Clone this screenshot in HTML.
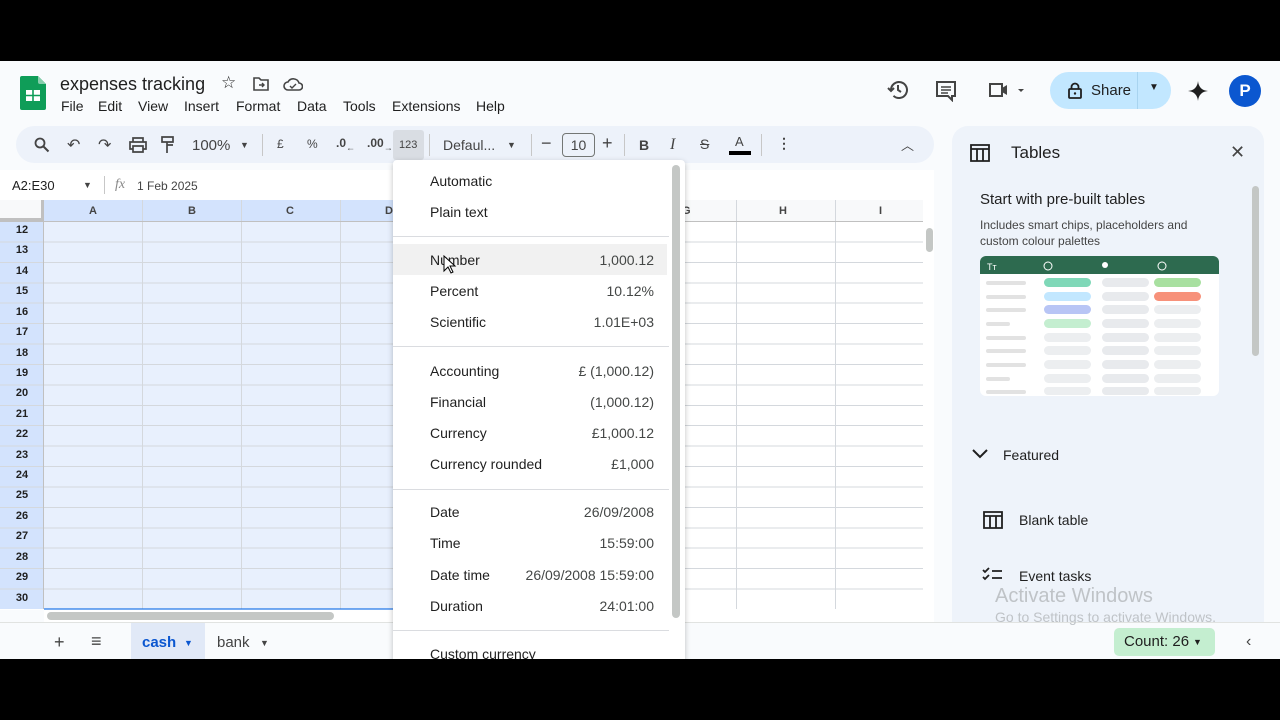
<!DOCTYPE html>
<html><head><meta charset="utf-8"><style>
*{box-sizing:border-box;margin:0;padding:0}
body{width:1280px;height:720px;background:#000;position:relative;overflow:hidden;font-family:"Liberation Sans",Arial,sans-serif;color:#1f1f1f}
.a{position:absolute}
#app{left:0;top:61px;width:1280px;height:598px;background:#f9fbfd;overflow:hidden}
.t{position:absolute;white-space:nowrap}
.ic{position:absolute}
.mi{position:absolute;left:0;width:292px;height:31px;font-size:14px;color:#1f1f1f}
.mi span{position:absolute;left:37px;top:8px}
.mi b{position:absolute;right:31px;top:8px;font-weight:normal;color:#444746}
.sep{position:absolute;left:0;width:276px;height:1px;background:#dadce0}
.rn{position:absolute;left:0;width:44px;text-align:center;font-size:11px;font-weight:bold;color:#1f1f1f}
.ch{position:absolute;top:205px;font-size:11px;font-weight:bold;color:#444}
.mb{position:absolute;top:37px;font-size:14px}
</style></head><body>
<div id="app" class="a">
<svg class="ic" style="left:20px;top:15px" width="26" height="34" viewBox="0 0 26 34"><path d="M2 0h16l8 8v24a2 2 0 0 1-2 2H2a2 2 0 0 1-2-2V2a2 2 0 0 1 2-2z" fill="#0f9d58"/><path d="M18 0l8 8h-6a2 2 0 0 1-2-2z" fill="#87ceac"/><rect x="6" y="14" width="14" height="11" fill="#fff"/><path d="M6 19.5h14M13 14v11" stroke="#0f9d58" stroke-width="1.6"/></svg>
<div class="t" style="left:60px;top:13px;font-size:18px">expenses tracking</div>
<div class="t" style="left:221px;top:12px;font-size:17px">☆</div>
<svg class="ic" style="left:253px;top:16px" width="16" height="14" viewBox="0 0 16 14"><path d="M1 1h5l2 2h7v10H1z" fill="none" stroke="#444" stroke-width="1.6"/><path d="M6 8h5M9 6l2 2-2 2" fill="none" stroke="#444" stroke-width="1.4"/></svg>
<svg class="ic" style="left:283px;top:16px" width="20" height="14" viewBox="0 0 20 14"><path d="M5 13a4 4 0 0 1 0-8 6 6 0 0 1 11 1 3.5 3.5 0 0 1 0 7z" fill="none" stroke="#444" stroke-width="1.6"/><path d="M7 9l2 2 4-4" fill="none" stroke="#444" stroke-width="1.4"/></svg>
<div class="mb" style="left:61px">File</div>
<div class="mb" style="left:98px">Edit</div>
<div class="mb" style="left:138px">View</div>
<div class="mb" style="left:184px">Insert</div>
<div class="mb" style="left:236px">Format</div>
<div class="mb" style="left:297px">Data</div>
<div class="mb" style="left:343px">Tools</div>
<div class="mb" style="left:392px">Extensions</div>
<div class="mb" style="left:476px">Help</div>
<svg class="ic" style="left:887px;top:18px" width="22" height="22" viewBox="0 0 22 22"><path d="M4 11a8 8 0 1 1 2.5 5.8" fill="none" stroke="#444" stroke-width="2"/><path d="M1 9l3 3 3-3" fill="none" stroke="#444" stroke-width="2"/><path d="M11 6v5l3 2" fill="none" stroke="#444" stroke-width="2"/></svg>
<svg class="ic" style="left:935px;top:19px" width="22" height="22" viewBox="0 0 22 22"><path d="M2 2h18v14h-3v4l-4-4H2z" fill="none" stroke="#444" stroke-width="2"/><path d="M6 7h10M6 10h10M6 13h7" stroke="#444" stroke-width="1.6"/></svg>
<svg class="ic" style="left:988px;top:21px" width="36" height="16" viewBox="0 0 36 16"><path d="M2 2h12v12H2z" fill="none" stroke="#444" stroke-width="2"/><path d="M14 6l5-3v10l-5-3z" fill="#444"/><path d="M30 7l3 3 3-3z" fill="#444"/></svg>
<div class="a" style="left:1050px;top:11px;width:121px;height:37px;border-radius:19px;background:#c2e7ff"></div>
<div class="a" style="left:1137px;top:11px;width:1px;height:37px;background:#a8d4f0"></div>
<svg class="ic" style="left:1068px;top:21px" width="14" height="17" viewBox="0 0 14 17"><rect x="1" y="7" width="12" height="9" rx="1" fill="none" stroke="#1f1f1f" stroke-width="1.8"/><path d="M3.5 7V5a3.5 3.5 0 0 1 7 0v2" fill="none" stroke="#1f1f1f" stroke-width="1.8"/><circle cx="7" cy="11.5" r="1.2" fill="#1f1f1f"/></svg>
<div class="t" style="left:1091px;top:21px;font-size:15px">Share</div>
<div class="t" style="left:1149px;top:21px;font-size:10px">▼</div>
<svg class="ic" style="left:1188px;top:20px" width="20" height="20" viewBox="0 0 20 20"><path d="M10 0C10.5 6 14 9.5 20 10 14 10.5 10.5 14 10 20 9.5 14 6 10.5 0 10 6 9.5 9.5 6 10 0z" fill="#1f1f1f"/></svg>
<div class="a" style="left:1229px;top:14px;width:32px;height:32px;border-radius:50%;background:#0b57d0;color:#fff;font-size:17px;text-align:center;line-height:32px;font-weight:bold">P</div>
<div class="a" style="left:16px;top:65px;width:918px;height:37px;border-radius:19px;background:#edf2fa"></div>
<svg class="ic" style="left:34px;top:76px" width="16" height="16" viewBox="0 0 16 16"><circle cx="6" cy="6" r="4.5" fill="none" stroke="#444" stroke-width="1.8"/><path d="M9.5 9.5l5 5" stroke="#444" stroke-width="2"/></svg>
<div class="t" style="left:67px;top:74px;font-size:16px;color:#444">↶</div>
<div class="t" style="left:98px;top:74px;font-size:16px;color:#444">↷</div>
<svg class="ic" style="left:129px;top:76px" width="18" height="16" viewBox="0 0 18 16"><path d="M4 5V1h10v4M4 12H1V5h16v7h-3M4 9h10v6H4z" fill="none" stroke="#444" stroke-width="1.7"/></svg>
<svg class="ic" style="left:161px;top:75px" width="14" height="18" viewBox="0 0 14 18"><path d="M1 1h11v5H1zM6 6v3h6v0M6 9v8" fill="none" stroke="#444" stroke-width="1.7"/></svg>
<div class="t" style="left:192px;top:76px;font-size:15px;color:#444">100%</div>
<div class="t" style="left:240px;top:79px;font-size:9px;color:#444">▼</div>
<div class="a" style="left:262px;top:73px;width:1px;height:22px;background:#c7c7c7"></div>
<div class="t" style="left:277px;top:76px;font-size:12px;color:#444">£</div>
<div class="t" style="left:307px;top:76px;font-size:12px;color:#444">%</div>
<div class="t" style="left:336px;top:75px;font-size:12px;color:#444;font-weight:bold">.0<sub style="font-size:9px">←</sub></div>
<div class="t" style="left:367px;top:75px;font-size:12px;color:#444;font-weight:bold">.00<sub style="font-size:9px">→</sub></div>
<div class="a" style="left:393px;top:69px;width:31px;height:30px;background:#d9dde3;border-radius:3px"></div>
<div class="t" style="left:399px;top:78px;font-size:11px;color:#444">123</div>
<div class="a" style="left:429px;top:73px;width:1px;height:22px;background:#c7c7c7"></div>
<div class="t" style="left:443px;top:76px;font-size:14px;color:#444">Defaul...</div>
<div class="t" style="left:507px;top:79px;font-size:9px;color:#444">▼</div>
<div class="a" style="left:531px;top:73px;width:1px;height:22px;background:#c7c7c7"></div>
<div class="t" style="left:541px;top:72px;font-size:18px;color:#444">−</div>
<div class="a" style="left:562px;top:72px;width:33px;height:24px;border:1px solid #747775;border-radius:4px;font-size:14px;text-align:center;line-height:22px;color:#444">10</div>
<div class="t" style="left:602px;top:72px;font-size:18px;color:#444">+</div>
<div class="a" style="left:624px;top:73px;width:1px;height:22px;background:#c7c7c7"></div>
<div class="t" style="left:639px;top:76px;font-size:14px;font-weight:bold;color:#444">B</div>
<div class="t" style="left:670px;top:75px;font-size:16px;font-style:italic;font-family:'Liberation Serif',serif;color:#444">I</div>
<div class="t" style="left:700px;top:75px;font-size:14px;color:#444;text-decoration:line-through">S</div>
<div class="t" style="left:735px;top:73px;font-size:13px;color:#444">A</div>
<div class="a" style="left:729px;top:90px;width:22px;height:4px;background:#000"></div>
<div class="a" style="left:761px;top:73px;width:1px;height:22px;background:#c7c7c7"></div>
<div class="t" style="left:777px;top:74px;font-size:14px;color:#444;font-weight:bold">⋮</div>
<div class="t" style="left:901px;top:74px;font-size:13px;color:#444">︿</div>
<div class="a" style="left:0;top:109px;width:934px;height:30px;background:#fff"></div>
<div class="t" style="left:12px;top:117px;font-size:13px">A2:E30</div>
<div class="t" style="left:83px;top:119px;font-size:9px;color:#444">▼</div>
<div class="a" style="left:104px;top:115px;width:1px;height:18px;background:#c7c7c7"></div>
<div class="t" style="left:115px;top:116px;font-size:14px;font-style:italic;color:#888;font-family:'Liberation Serif',serif">fx</div>
<div class="t" style="left:137px;top:118px;font-size:12px;color:#444">1 Feb 2025</div>
<div class="a" style="left:0;top:139px;width:934px;height:410px;background:#fff"></div>
<div class="a" style="left:44px;top:160px;width:493px;height:388px;background:#e8f0fd"></div>
<div class="a" style="left:44px;top:139px;width:493px;height:21px;background:#d3e3fd"></div>
<div class="a" style="left:537px;top:139px;width:386px;height:21px;background:#f8f9fa"></div>
<div class="a" style="left:0;top:160px;width:44px;height:388px;background:#d3e3fd"></div>
<div class="a" style="left:44px;top:139px;width:879px;height:409px;background:repeating-linear-gradient(to right,transparent 0,transparent 98px,#d4d8dd 98px,#d4d8dd 99px)"></div>
<div class="a" style="left:0;top:160px;width:923px;height:388px;background:repeating-linear-gradient(to bottom,#d4d8dd 0,#d4d8dd 1px,transparent 1px,transparent 20.42px)"></div>
<div class="a" style="left:0;top:139px;width:44px;height:21px;background:#f8f9fa;border-right:3px solid #c0c0c0;border-bottom:3px solid #c0c0c0"></div>
<div class="a" style="left:0;top:160px;width:923px;height:1px;background:#c0c0c0"></div>
<div class="a" style="left:43px;top:139px;width:1px;height:409px;background:#c0c0c0"></div>
<div class="a" style="left:44px;top:547px;width:493px;height:2px;background:#1a73e8;opacity:.6"></div>
<div class="ch" style="left:89px;top:144px">A</div>
<div class="ch" style="left:188px;top:144px">B</div>
<div class="ch" style="left:286px;top:144px">C</div>
<div class="ch" style="left:385px;top:144px">D</div>
<div class="ch" style="left:682px;top:144px">G</div>
<div class="ch" style="left:779px;top:144px">H</div>
<div class="ch" style="left:879px;top:144px">I</div>
<div class="rn" style="top:163px">12</div><div class="rn" style="top:183px">13</div><div class="rn" style="top:204px">14</div><div class="rn" style="top:224px">15</div><div class="rn" style="top:245px">16</div><div class="rn" style="top:265px">17</div><div class="rn" style="top:286px">18</div><div class="rn" style="top:306px">19</div><div class="rn" style="top:326px">20</div><div class="rn" style="top:347px">21</div><div class="rn" style="top:367px">22</div><div class="rn" style="top:388px">23</div><div class="rn" style="top:408px">24</div><div class="rn" style="top:428px">25</div><div class="rn" style="top:449px">26</div><div class="rn" style="top:469px">27</div><div class="rn" style="top:490px">28</div><div class="rn" style="top:510px">29</div><div class="rn" style="top:531px">30</div>
<div class="a" style="left:923px;top:160px;width:11px;height:388px;background:#fff"></div>
<div class="a" style="left:926px;top:167px;width:7px;height:24px;border-radius:4px;background:#c4c7c5"></div>
<div class="a" style="left:44px;top:549px;width:890px;height:12px;background:#fff"></div>
<div class="a" style="left:47px;top:551px;width:287px;height:8px;border-radius:4px;background:#c4c7c5"></div>
<div class="a" style="left:0;top:561px;width:1280px;height:37px;background:#f9fbfd;border-top:1px solid #e1e3e1"></div>
<div class="t" style="left:54px;top:571px;font-size:18px;color:#444">+</div>
<div class="t" style="left:91px;top:570px;font-size:18px;color:#444">≡</div>
<div class="a" style="left:131px;top:562px;width:74px;height:36px;background:#e1e9f7"></div>
<div class="t" style="left:142px;top:573px;font-size:15px;color:#0b57d0;font-weight:bold">cash</div>
<div class="t" style="left:184px;top:577px;font-size:9px;color:#0b57d0">▼</div>
<div class="t" style="left:217px;top:573px;font-size:15px;color:#444">bank</div>
<div class="t" style="left:260px;top:577px;font-size:9px;color:#444">▼</div>
<div class="a" style="left:1114px;top:567px;width:101px;height:28px;border-radius:5px;background:#c4eed0"></div>
<div class="t" style="left:1124px;top:572px;font-size:15px">Count: 26</div>
<div class="t" style="left:1193px;top:576px;font-size:9px">▼</div>
<div class="t" style="left:1246px;top:572px;font-size:16px;color:#444">‹</div>
<div class="a" style="left:952px;top:65px;width:312px;height:496px;border-radius:16px 16px 0 0;background:#eef3fa"></div>
<svg class="ic" style="left:970px;top:83px" width="20" height="18" viewBox="0 0 20 18"><path d="M1 1h18v16H1zM1 5h18M7 5v12M13 5v12" fill="none" stroke="#1f1f1f" stroke-width="1.8"/></svg>
<div class="t" style="left:1011px;top:82px;font-size:17px">Tables</div>
<div class="t" style="left:1230px;top:81px;font-size:18px;color:#444">✕</div>
<div class="a" style="left:1252px;top:125px;width:7px;height:170px;border-radius:4px;background:#c4c7c5"></div>
<div class="t" style="left:980px;top:130px;font-size:15px">Start with pre-built tables</div>
<div class="t" style="left:980px;top:156px;font-size:12px;color:#444;line-height:16px">Includes smart chips, placeholders and<br>custom colour palettes</div>
<svg class="ic" style="left:980px;top:195px" width="239" height="140" viewBox="0 0 239 140">
<rect x="0" y="0" width="239" height="140" rx="6" fill="#fff"/>
<path d="M0 6a6 6 0 0 1 6-6h227a6 6 0 0 1 6 6v12H0z" fill="#2d6a4f"/>
<text x="7" y="14" font-size="9" fill="#fff" font-family="Liberation Sans">Tт</text>
<circle cx="68" cy="10" r="4" fill="none" stroke="#fff"/><circle cx="125" cy="9" r="3" fill="#fff"/><circle cx="182" cy="10" r="4" fill="none" stroke="#fff"/>
<rect x="6" y="25" width="40" height="4" rx="2" fill="#e2e2e2"/><rect x="64" y="22" width="47" height="9" rx="4.5" fill="#7fd8b8"/><rect x="122" y="22" width="47" height="9" rx="4.5" fill="#e8eaed"/><rect x="174" y="22" width="47" height="9" rx="4.5" fill="#a8e0a0"/>
<rect x="6" y="39" width="40" height="4" rx="2" fill="#e2e2e2"/><rect x="64" y="36" width="47" height="9" rx="4.5" fill="#c2e7ff"/><rect x="122" y="36" width="47" height="9" rx="4.5" fill="#e8eaed"/><rect x="174" y="36" width="47" height="9" rx="4.5" fill="#f7917a"/>
<rect x="6" y="52" width="40" height="4" rx="2" fill="#e2e2e2"/><rect x="64" y="49" width="47" height="9" rx="4.5" fill="#b8c5f5"/><rect x="122" y="49" width="47" height="9" rx="4.5" fill="#e8eaed"/><rect x="174" y="49" width="47" height="9" rx="4.5" fill="#eceef0"/>
<rect x="6" y="66" width="24" height="4" rx="2" fill="#e2e2e2"/><rect x="64" y="63" width="47" height="9" rx="4.5" fill="#c4eed0"/><rect x="122" y="63" width="47" height="9" rx="4.5" fill="#e8eaed"/><rect x="174" y="63" width="47" height="9" rx="4.5" fill="#eceef0"/>
<rect x="6" y="80" width="40" height="4" rx="2" fill="#e2e2e2"/><rect x="64" y="77" width="47" height="9" rx="4.5" fill="#eceef0"/><rect x="122" y="77" width="47" height="9" rx="4.5" fill="#e8eaed"/><rect x="174" y="77" width="47" height="9" rx="4.5" fill="#eceef0"/>
<rect x="6" y="93" width="40" height="4" rx="2" fill="#e2e2e2"/><rect x="64" y="90" width="47" height="9" rx="4.5" fill="#eceef0"/><rect x="122" y="90" width="47" height="9" rx="4.5" fill="#e8eaed"/><rect x="174" y="90" width="47" height="9" rx="4.5" fill="#eceef0"/>
<rect x="6" y="107" width="40" height="4" rx="2" fill="#e2e2e2"/><rect x="64" y="104" width="47" height="9" rx="4.5" fill="#eceef0"/><rect x="122" y="104" width="47" height="9" rx="4.5" fill="#e8eaed"/><rect x="174" y="104" width="47" height="9" rx="4.5" fill="#eceef0"/>
<rect x="6" y="121" width="24" height="4" rx="2" fill="#e2e2e2"/><rect x="64" y="118" width="47" height="9" rx="4.5" fill="#eceef0"/><rect x="122" y="118" width="47" height="9" rx="4.5" fill="#e8eaed"/><rect x="174" y="118" width="47" height="9" rx="4.5" fill="#eceef0"/>
<rect x="6" y="134" width="40" height="4" rx="2" fill="#e2e2e2"/><rect x="64" y="131" width="47" height="8" rx="4" fill="#eceef0"/><rect x="122" y="131" width="47" height="8" rx="4" fill="#e8eaed"/><rect x="174" y="131" width="47" height="8" rx="4" fill="#eceef0"/>
</svg>
<svg class="ic" style="left:972px;top:388px" width="16" height="10" viewBox="0 0 16 10"><path d="M1 1l7 7 7-7" fill="none" stroke="#1f1f1f" stroke-width="2"/></svg>
<div class="t" style="left:1003px;top:386px;font-size:14px">Featured</div>
<svg class="ic" style="left:983px;top:450px" width="20" height="18" viewBox="0 0 20 18"><path d="M1 1h18v16H1zM1 5h18M7 5v12M13 5v12" fill="none" stroke="#1f1f1f" stroke-width="1.8"/></svg>
<div class="t" style="left:1019px;top:451px;font-size:14px">Blank table</div>
<svg class="ic" style="left:982px;top:506px" width="21" height="15" viewBox="0 0 21 15"><path d="M1 3l2 2 4-4M1 10l2 2 4-4M10 4h10M10 11h10" fill="none" stroke="#1f1f1f" stroke-width="1.8"/></svg>
<div class="t" style="left:1019px;top:507px;font-size:14px">Event tasks</div>
<div class="t" style="left:995px;top:524px;font-size:20px;color:#bfc3c7">Activate Windows</div>
<div class="t" style="left:995px;top:548px;font-size:14px;color:#bfc3c7">Go to Settings to activate Windows.</div>
<div class="a" style="left:393px;top:99px;width:292px;height:510px;background:#fff;box-shadow:0 2px 6px rgba(0,0,0,.25);border-radius:4px">
<div class="a" style="left:279px;top:5px;width:8px;height:453px;border-radius:4px;background:#c4c7c5"></div>
<div class="mi" style="top:5px"><span>Automatic</span></div>
<div class="mi" style="top:36px"><span>Plain text</span></div>
<div class="sep" style="top:76px"></div>
<div class="mi" style="top:84px;background:#f1f1f1;width:274px"><span>Number</span><b style="right:13px">1,000.12</b></div>
<div class="mi" style="top:115px"><span>Percent</span><b>10.12%</b></div>
<div class="mi" style="top:146px"><span>Scientific</span><b>1.01E+03</b></div>
<div class="sep" style="top:186px"></div>
<div class="mi" style="top:195px"><span>Accounting</span><b>£ (1,000.12)</b></div>
<div class="mi" style="top:226px"><span>Financial</span><b>(1,000.12)</b></div>
<div class="mi" style="top:257px"><span>Currency</span><b>£1,000.12</b></div>
<div class="mi" style="top:288px"><span>Currency rounded</span><b>£1,000</b></div>
<div class="sep" style="top:329px"></div>
<div class="mi" style="top:336px"><span>Date</span><b>26/09/2008</b></div>
<div class="mi" style="top:367px"><span>Time</span><b>15:59:00</b></div>
<div class="mi" style="top:399px"><span>Date time</span><b>26/09/2008 15:59:00</b></div>
<div class="mi" style="top:430px"><span>Duration</span><b>24:01:00</b></div>
<div class="sep" style="top:470px"></div>
<div class="mi" style="top:478px"><span>Custom currency</span></div>
</div>
<svg class="ic" style="left:443px;top:194px" width="14" height="20" viewBox="0 0 14 20"><path d="M1 1v15l4-4 3 6 2-1-3-6h5z" fill="#fff" stroke="#000" stroke-width="1"/></svg>
</div>
</body></html>
